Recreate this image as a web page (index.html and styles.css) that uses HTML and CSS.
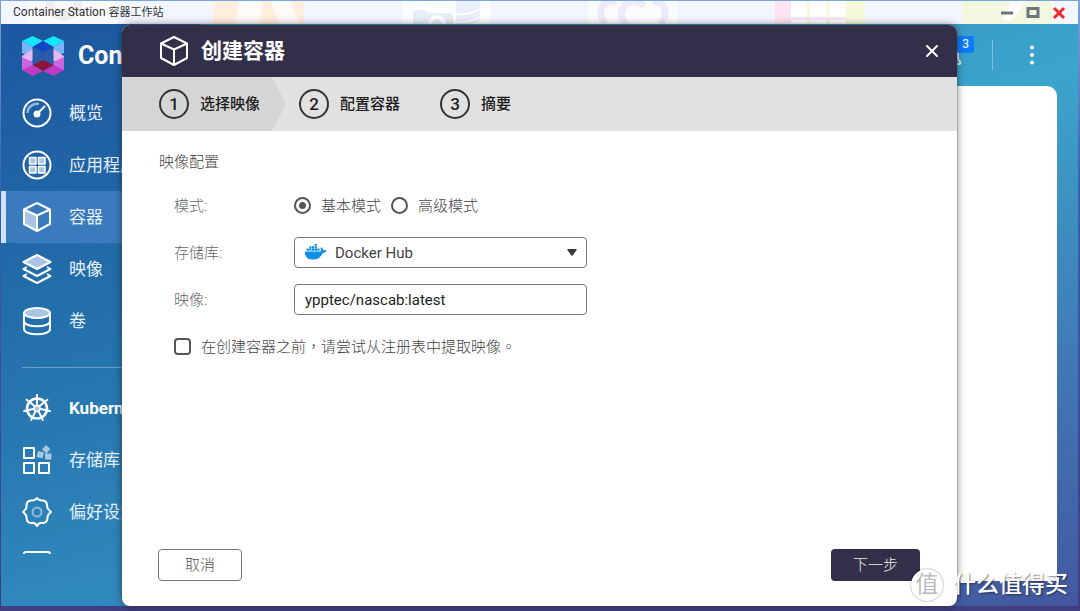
FILE: index.html
```html
<!DOCTYPE html>
<html lang="zh-CN">
<head>
<meta charset="utf-8">
<meta name="viewport" content="width=device-width, initial-scale=1">
<title>Container Station 容器工作站</title>
<link rel="stylesheet" href="styles.css">
</head>
<body>
<div class="window">
  <header class="titlebar">
    <svg class="titlebar-art" viewBox="0 0 1077 23" preserveAspectRatio="none" aria-hidden="true">
      <rect width="1077" height="23" fill="#f2f6fe"/>
      <rect x="26" width="89" height="23" fill="#fafafa"/>
      <circle cx="63" cy="2" r="18" fill="#eeeeee"/><circle cx="63" cy="0" r="10" fill="#fafafa"/>
      <path d="M212 0h91v23h-91z" fill="#feeedd"/><path d="M238 0h25l-5 23h-24zM270 0h20l8 23h-20z" fill="#fffaf5"/>
      <rect x="401" width="88" height="23" fill="#fbfdfe"/>
      <path d="M412 23V12q0-3 3-3h9l3 3h22q3 0 3 3v8z" fill="#e6eff7"/><path d="M412 9l3-2h10l3 3h22q4 0 4 4v9" fill="none" stroke="#fff" stroke-width="3"/><circle cx="436" cy="23" r="7" fill="none" stroke="#fff" stroke-width="4"/>
      <path d="M455 0h24v20q-11 5-24 3z" fill="#e9effc"/><path d="M455 13q14 1 24-5M455 21q14 1 24-5" fill="none" stroke="#fff" stroke-width="2"/>
      <rect x="587" width="89" height="23" fill="#fbfcfe"/>
      <g fill="none" stroke="#ecebfb" stroke-width="7"><path d="M615 0q-16 0-15 13 0 6 5 10M652 0q13 1 12 13 0 6-5 10"/><path d="M643 5a13 13 0 1 0-2 19"/></g>
      <path d="M774 0h18v23h-18z" fill="#fce5ee"/><path d="M792 0h72v23h-72z" fill="#f6f9da"/>
      <path d="M790 0h16v16h-16zM809 0h16v16h-16zM828 0h17v16h-17zM790 19h16v4h-16zM809 19h16v4h-16zM828 19h17v4h-17z" fill="#fff"/>
      <path d="M790 16h55v3h-55z" fill="#f4e8f4"/>
      <path d="M961 0h90v23h-90z" fill="#f1f8df"/><path d="M1010 0h14q-6 14-16 20l-6-2z" fill="#fff"/>
    </svg>
    <span class="titlebar-text">Container Station <span class="titlebar-local">容器工作站</span></span>
    <div class="window-controls">
      <button type="button" aria-label="最小化"><svg width="14" height="14" viewBox="0 0 14 14"><path d="M1 7h12" stroke="#6e7682" stroke-width="3"/></svg></button>
      <button type="button" aria-label="最大化"><svg width="14" height="14" viewBox="0 0 14 14"><path d="M2 2.500h10v8H2z" fill="none" stroke="#6e7682" stroke-width="3"/></svg></button>
      <button type="button" aria-label="关闭窗口"><svg width="14" height="14" viewBox="0 0 14 14"><path d="M2 2l10 10M12 2L2 12" stroke="#ee2c2c" stroke-width="3"/></svg></button>
    </div>
  </header>

  <div class="app">
    <div class="brand">
      <svg class="logo" viewBox="0 0 44 40" aria-hidden="true">
        <path d="M1 5L11.500 0 22 5 11.500 11zM22 5l10.500-5L43 5l-10.500 6z" fill="#14e6fb"/>
        <path d="M1 5l10.500 6v9L1 17zM43 5l-10.500 6v9L43 17z" fill="#75b5f8"/>
        <path d="M22 5l10.500 6L22 16 11.500 11z" fill="#1445c8"/>
        <path d="M11.500 11L22 16v9l-10.500 4zM32.500 11L22 16v9l10.500 4z" fill="#2a5ba8"/>
        <path d="M1 20l10.500-7v12L1 27zM43 20l-10.500-7v12L43 27z" fill="#e2b8ef"/>
        <path d="M1 21l10.500 5v8L1 34zM43 21l-10.500 5v8L43 34z" fill="#cb65e2"/>
        <path d="M22 24l10.500 5L22 35l-10.500-6z" fill="#8b1536"/>
        <path d="M1 34l10.500-5L22 35l-10.500 5zM43 34l-10.500-5L22 35l10.500 5z" fill="#bd3bc5"/>
      </svg>
      <span class="brand-name">Con</span>
    </div>

    <nav class="sidebar">
      <a class="nav-item" href="#">
        <svg class="nav-icon" viewBox="0 0 30 30"><circle cx="15" cy="15" r="13.500"/><path class="soft" d="M5.500 15A9.500 9.500 0 0 1 17 6" stroke-width="2.500"/><circle class="solid" cx="15" cy="16" r="2.500"/><path d="M15 16l8-8"/></svg>
        <span>概览</span>
      </a>
      <a class="nav-item" href="#">
        <svg class="nav-icon" viewBox="0 0 30 30"><circle cx="15" cy="15" r="13.500"/><path class="tint" stroke-width="1.500" d="M7.500 7.500h6.500v6.500H7.500zM16.500 7.500H23v6.500h-6.500zM7.500 16.500h6.500V23H7.500zM16.500 16.500H23V23h-6.500z"/></svg>
        <span>应用程序</span>
      </a>
      <a class="nav-item active" href="#" aria-current="page">
        <svg class="nav-icon" viewBox="0 0 30 30"><path class="tint" d="M2 7.500l13 6V29L2 22z"/><path d="M15 1l13 6.500V22l-13 7M2 7.500L15 1M15 13.500l13-6"/></svg>
        <span>容器</span>
      </a>
      <a class="nav-item" href="#">
        <svg class="nav-icon" viewBox="0 0 30 30"><path class="tint" d="M15 1l13.500 7L15 15 1.500 8z"/><path d="M5 13l-3.500 2L15 22l13.500-7-3.500-2M5 20l-3.500 2L15 29l13.500-7-3.500-2"/></svg>
        <span>映像</span>
      </a>
      <a class="nav-item" href="#">
        <svg class="nav-icon" viewBox="0 0 30 30"><ellipse class="tint" cx="15" cy="7" rx="13" ry="5"/><path d="M2 7v16c0 7 26 7 26 0V7M2 15c0 7 26 7 26 0"/></svg>
        <span>卷</span>
      </a>
      <hr class="nav-rule">
      <a class="nav-item strong" href="#">
        <svg class="nav-icon" viewBox="0 0 30 30"><circle cx="15" cy="15.500" r="10" stroke-width="2.500"/><circle class="tint" cx="15" cy="15.500" r="3" stroke-width="1.500"/><path d="M15 12V1M17.300 13.100L26 6.200M17.900 15.700l10.800 2.500M16.300 17.700l4.800 9.900M13.700 17.700l-4.800 9.900M12.100 15.700L1.300 18.200M12.700 13.100L4 6.200"/></svg>
        <span>Kubernetes</span>
      </a>
      <a class="nav-item" href="#">
        <svg class="nav-icon" viewBox="0 0 30 30"><path d="M2 3h10v10H2zM2 18h10v10H2zM17 18h10v10H17z"/><path class="softfill" d="M24 0l4.500 4-4 4.500-4.500-4zM16 6l6 1.500-1.500 6-6-1.500zM23 8.500h6.500v6H23z"/></svg>
        <span>存储库</span>
      </a>
      <a class="nav-item" href="#">
        <svg class="nav-icon" viewBox="0 0 30 30"><path d="M15 1q2 3 6 2.500 4 .5 4 5Q25 12 29 15q-4 3-3.500 6-.5 5-4.500 5-4-1-6 3-2-4-6-3-4 0-4.500-5Q5 18 1 15q4-3 3.500-6.500 0-4.500 4.500-5Q13 4 15 1z"/><circle class="soft" cx="15" cy="15" r="4.500"/></svg>
        <span>偏好设置</span>
      </a>
      <div class="nav-more"></div>
    </nav>

    <main class="content">
      <div class="toolbar">
        <button type="button" class="bell" aria-label="通知">
          <svg width="22" height="24" viewBox="0 0 22 24"><path d="M4 15V9a7 7 0 0 1 14 0v6q0 2 2 3.500 1 2.500-1 2.500H3q-2 0-1-2.500Q4 17 4 15z" fill="none" stroke="#d6ebf5" stroke-width="2"/></svg>
          <span class="badge">3</span>
        </button>
        <span class="divider"></span>
        <button type="button" class="dots" aria-label="更多"><svg width="6" height="20" viewBox="0 0 6 20" fill="#fff"><circle cx="3" cy="2.500" r="2"/><circle cx="3" cy="10" r="2"/><circle cx="3" cy="17.500" r="2"/></svg></button>
      </div>
      <div class="panel"></div>
    </main>
  </div>
</div>

<section class="dialog" role="dialog" aria-labelledby="dialog-title">
  <header class="dialog-header">
    <svg width="28" height="30" viewBox="0 0 28 30" fill="none" stroke="#fff" stroke-width="2" stroke-linejoin="round"><path d="M14 1l13 6.500v14.500L14 29 1 22V7.500zM1 7.500l13 6 13-6M14 13.500V29"/></svg>
    <h1 id="dialog-title">创建容器</h1>
    <button type="button" class="dialog-close" aria-label="关闭"><svg width="12" height="12" viewBox="0 0 12 12"><path d="M1 1l10 10M11 1L1 11" stroke="#fff" stroke-width="2" stroke-linecap="round"/></svg></button>
  </header>
  <ol class="steps">
    <li class="step current"><span class="step-num">1</span>选择映像</li>
    <li class="step"><span class="step-num">2</span>配置容器</li>
    <li class="step"><span class="step-num">3</span>摘要</li>
  </ol>
  <form class="form">
    <h2>映像配置</h2>
    <div class="row">
      <span class="row-label" id="mode-label">模式:</span>
      <div class="radios" role="radiogroup" aria-labelledby="mode-label">
        <label><input type="radio" name="mode" checked>基本模式</label>
        <label><input type="radio" name="mode">高级模式</label>
      </div>
    </div>
    <div class="row">
      <label class="row-label" for="repo">存储库:</label>
      <div class="select">
        <select id="repo"><option>Docker Hub</option></select>
        <svg class="whale" viewBox="0 0 22 16" fill="#0b90e4"><path d="M0 7.500h15.500q.8-1.500 0-3.500l.8-.8q1.700 1 1.900 2.800 1.900-.3 3.400.8-1 2.200-3.800 2.200Q15 15.500 8 15.500-.5 15.500 0 7.500z"/><path d="M1.600 4.600h2.200v2.200H1.600zM4.300 4.600h2.200v2.200H4.300zM7 4.600h2.200v2.200H7zM9.700 4.600h2.200v2.200H9.700zM12.300 4.600h2.200v2.200h-2.200zM4.300 2.200h2.200v2H4.300zM7 2.200h2.200v2H7zM9.700 2.200h2.200v2H9.700zM9.700 0h2.200v1.800H9.700z"/></svg>
        <svg class="caret" viewBox="0 0 10 7" fill="#3c3c3c"><path d="M1 0h8q1 0 .6 1L6 6q-1 1.300-2 0L.4 1Q0 0 1 0z"/></svg>
      </div>
    </div>
    <div class="row">
      <label class="row-label" for="image">映像:</label>
      <input class="text" id="image" type="text" value="ypptec/nascab:latest">
    </div>
    <label class="check" lang="zh-TW"><input type="checkbox">在创建容器之前，请尝试从注册表中提取映像。</label>
  </form>
  <footer class="dialog-footer">
    <button type="button" class="btn">取消</button>
    <button type="button" class="btn primary">下一步</button>
  </footer>
</section>

<div class="watermark"><span class="watermark-seal">值</span><span>什么值得买</span></div>
</body>
</html>
```

FILE: styles.css
```css
* { box-sizing: border-box; }

html, body { height: 100%; }

body {
  margin: 0;
  padding: 1px 2px 5px 1px;
  position: relative;
  overflow: hidden;
  background: linear-gradient(#7ba3dc, #3a5fae 30%, #403e80);
  font-family: Roboto, "Noto Sans CJK TC", sans-serif;
  font-size: 15px;
  line-height: 20px;
  color: #444;
}

button {
  padding: 0;
  border: 0;
  background: none;
  font: inherit;
}

svg { display: block; }

.window {
  display: flex;
  flex-direction: column;
  height: 100%;
}

.titlebar {
  position: relative;
  display: flex;
  align-items: center;
  justify-content: space-between;
  height: 23px;
  padding: 0 12px;
  font-size: 12px;
  color: #333;
}

.titlebar-art {
  position: absolute;
  inset: 0;
  width: 100%;
  height: 100%;
}

.titlebar-text { position: relative; }

.titlebar-local { font-size: 11px; }

.window-controls {
  position: relative;
  display: flex;
  gap: 12px;
}

.app {
  flex: 1;
  min-height: 0;
  display: grid;
  grid-template: 63px 1fr / 200px 1fr;
  background: linear-gradient(165deg, #1c57a0, #2470ab 50%, #318cbf) 0 0 / 200px 100%;
}

.brand {
  display: flex;
  align-items: center;
  gap: 13px;
  padding-left: 20px;
  font-size: 25px;
  font-weight: 700;
  color: #fff;
}

.logo {
  width: 44px;
  height: 40px;
}

.sidebar {
  grid-row: 2;
  display: flex;
  flex-direction: column;
}

.nav-item {
  display: flex;
  align-items: center;
  gap: 17px;
  height: 52px;
  padding-left: 21px;
  color: #e6f0fa;
  font-size: 17px;
  font-weight: 400;
  text-decoration: none;
}

.nav-item.active {
  padding-left: 16px;
  border-left: 5px solid #cfe2ff;
  background: #3a7bbd;
}

.nav-item.strong {
  color: #fff;
  font-weight: 700;
}

.nav-icon {
  width: 30px;
  height: 30px;
  fill: none;
  stroke: #fff;
  stroke-width: 2;
  stroke-linejoin: round;
  overflow: visible;
}

.nav-icon .tint { fill: #a9c5e3; }
.nav-icon .soft { stroke: #8fbadb; }
.nav-icon .solid { fill: #fff; }
.nav-icon .softfill { fill: #a5c9e2; stroke: none; }

.nav-rule {
  width: 100%;
  height: 1px;
  margin: 20px 0 14px 21px;
  border: 0;
  background: #6ba2cc;
}

.nav-more {
  width: 28px;
  height: 3px;
  margin: 13px 0 0 22px;
  border: 2px solid #fff;
  border-bottom: 0;
  border-radius: 3px 3px 0 0;
}

.content {
  grid-column: 2;
  grid-row: 1 / 3;
  display: flex;
  flex-direction: column;
  padding: 0 21px 25px 0;
  background: linear-gradient(165deg, #3898c4, #3898c4 20%, #3ba5cc 34%, #4172b2 75%, #4458a0);
}

.toolbar {
  display: flex;
  align-items: center;
  justify-content: flex-end;
  height: 62px;
  padding-right: 22px;
}

.bell { position: relative; }

.badge {
  position: absolute;
  top: -7px;
  right: -12px;
  width: 17px;
  border-radius: 2px;
  background: #0a7cff;
  color: #fff;
  font-size: 12px;
  line-height: 17px;
}

.divider {
  width: 1px;
  height: 30px;
  margin: 0 36px 0 30px;
  background: #7dbfdc;
}

.panel {
  flex: 1;
  border-radius: 0 10px 0 0;
  background: #fff;
}

.dialog {
  position: absolute;
  inset: 25px 123px 5px 122px;
  display: flex;
  flex-direction: column;
  overflow: hidden;
  border-radius: 8px;
  background: #fff;
  box-shadow: 0 0 2px #555, 0 0 8px rgba(0, 0, 0, .45);
}

.dialog-header {
  display: flex;
  align-items: center;
  gap: 13px;
  height: 52px;
  padding: 0 19px 0 38px;
  background: #342f48;
}

.dialog-header h1 {
  flex: 1;
  margin: 0;
  color: #fff;
  font-size: 21px;
  font-weight: 700;
}

.steps {
  display: flex;
  height: 54px;
  margin: 0;
  padding: 0;
  list-style: none;
  background: #e1e1e1;
  color: #1c1c1c;
  font-weight: 500;
}

.step {
  display: flex;
  align-items: center;
  gap: 11px;
  padding-right: 40px;
}

.step.current {
  padding: 0 26px 0 37px;
  margin-right: 13px;
  background: #d5d5d5;
  clip-path: polygon(0 0, calc(100% - 14px) 0, 100% 50%, calc(100% - 14px) 100%, 0 100%);
}

.step-num {
  width: 30px;
  height: 30px;
  border: 2px solid #333;
  border-radius: 50%;
  font-size: 17px;
  line-height: 26px;
  text-align: center;
}

.form {
  flex: 1;
  padding: 21px 37px 0;
  font-weight: 300;
}

.form h2 {
  margin: 0 0 18px;
  font-size: 15px;
  font-weight: 300;
  line-height: 20px;
}

.row {
  display: grid;
  grid-template-columns: 120px 293px;
  align-items: center;
  height: 31px;
  margin: 0 0 16px 15px;
}

.row-label { color: #666; }

.radios {
  display: flex;
  gap: 10px;
}

.radios label, .check {
  display: flex;
  align-items: center;
  gap: 10px;
}

.check {
  height: 31px;
  margin-left: 15px;
}

input[type="radio"], input[type="checkbox"] {
  appearance: none;
  width: 17px;
  height: 17px;
  margin: 0;
  border: 2px solid #555;
  border-radius: 50%;
}

input[type="checkbox"] { border-radius: 4px; }

input[type="radio"]:checked {
  background: radial-gradient(circle, #555 3px, transparent 4px);
}

.select { position: relative; }

.select select, .text {
  display: block;
  appearance: none;
  width: 100%;
  height: 31px;
  padding: 0 10px;
  border: 1px solid #777;
  border-radius: 4px;
  background: #fff;
  color: #222;
  font: 15px Roboto, sans-serif;
}

.select select {
  padding-left: 40px;
  color: #444;
}

.whale, .caret {
  position: absolute;
  pointer-events: none;
}

.whale {
  top: 7px;
  left: 11px;
  width: 22px;
  height: 16px;
}

.caret {
  top: 12px;
  right: 10px;
  width: 10px;
  height: 7px;
}

.dialog-footer {
  display: flex;
  justify-content: space-between;
  padding: 0 37px 25px 36px;
}

.btn {
  width: 84px;
  height: 32px;
  border: 1px solid #777;
  border-radius: 4px;
  color: #555;
  font-weight: 300;
}

.btn.primary {
  width: 89px;
  border: 0;
  background: #342f48;
  color: #eee;
}

.watermark {
  position: absolute;
  right: 12px;
  bottom: 10px;
  display: flex;
  align-items: center;
  gap: 10px;
  color: #fff;
  font: 500 23px/32px Roboto, "Noto Sans CJK SC", sans-serif;
  text-shadow: 1px 1px 2px rgba(0, 0, 0, .5);
}

.watermark-seal {
  width: 32px;
  height: 32px;
  border-radius: 50%;
  background: #fff;
  box-shadow: 0 0 2px rgba(0, 0, 0, .5);
  color: #bbb;
  font-weight: 400;
  text-align: center;
  text-shadow: none;
}
```
